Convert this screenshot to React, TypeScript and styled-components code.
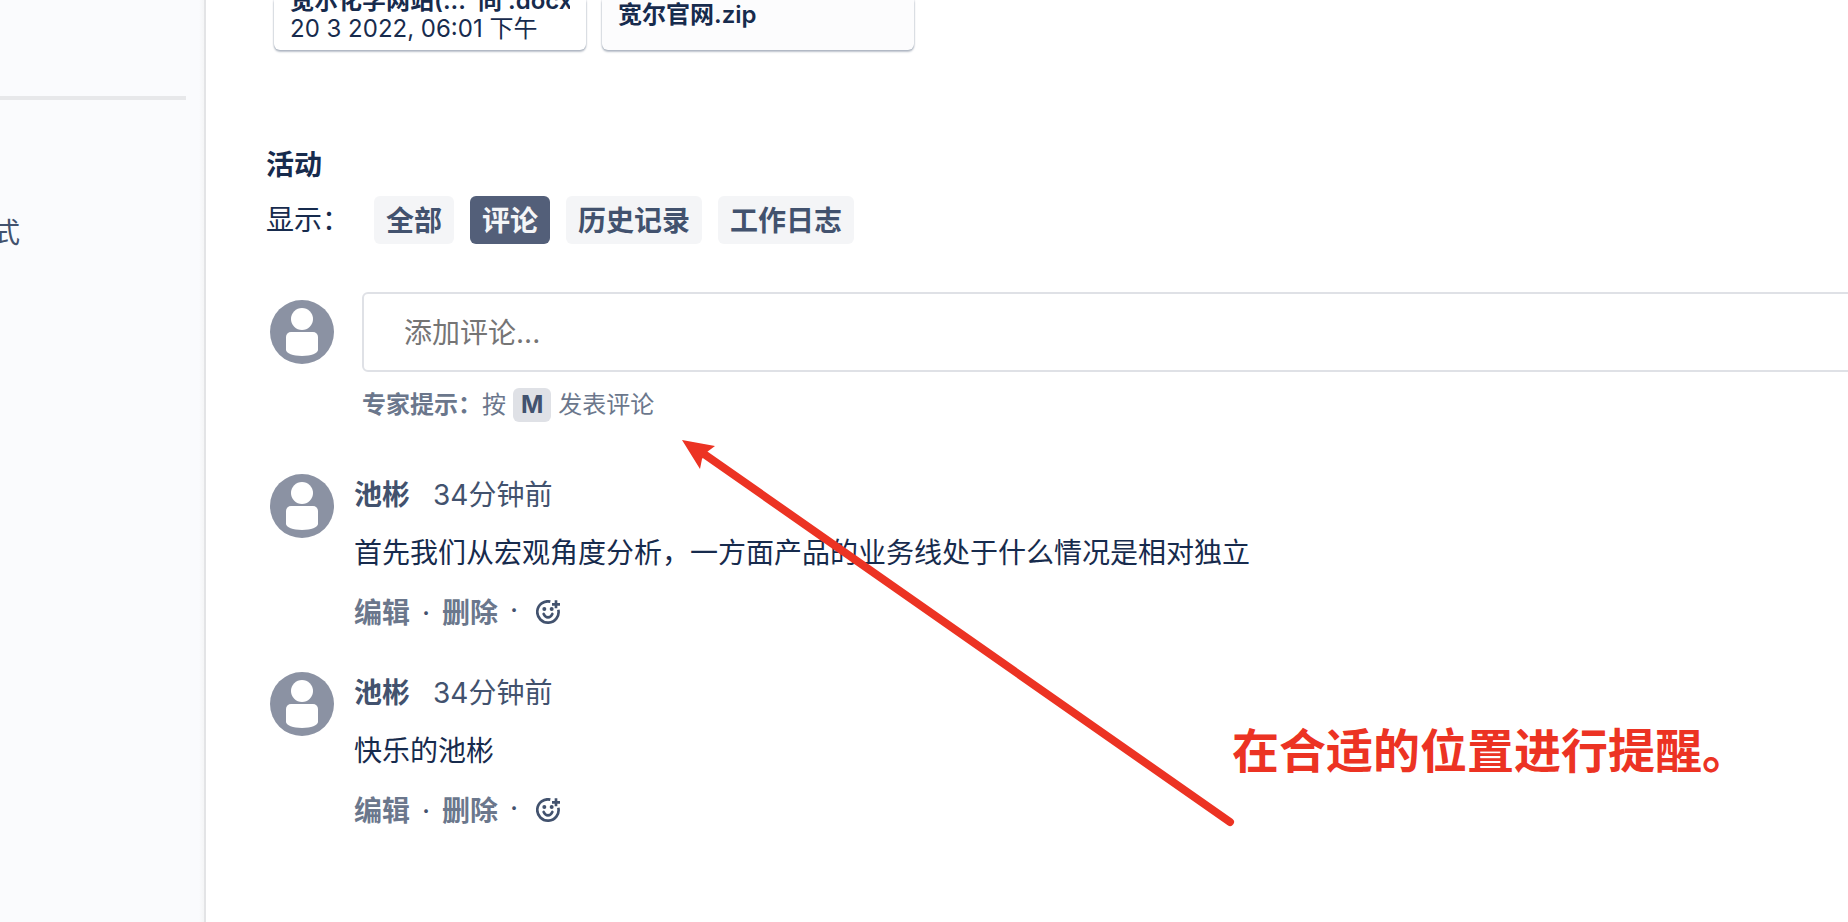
import React from 'react';
import styled, { createGlobalStyle } from 'styled-components';

const GlobalStyle = createGlobalStyle`
  *, *::before, *::after { box-sizing: border-box; }
  body {
    margin: 0;
    background: #fff;
    color: #172b4d;
    font-family: Inter, 'Noto Sans CJK SC', sans-serif;
    font-size: 28px;
    line-height: 42px;
  }
  button, input { font: inherit; }
`;

const Page = styled.div`
  position: relative;
  display: flex;
  min-height: 100vh;
  overflow: hidden;
`;

const Sidebar = styled.aside`
  flex: none;
  width: 206px;
  padding-top: 96px;
  background: linear-gradient(to left, #f4f5f6, #fafbfd 5px);
  border-right: 2px solid #e3e4e6;
`;

const Divider = styled.hr`
  height: 4px;
  margin: 0 18px 0 0;
  border: 0;
  background: #e7e8ea;
`;

const SidebarItem = styled.a`
  display: flex;
  justify-content: flex-end;
  width: 20px;
  margin-top: 112px;
  overflow: hidden;
  color: #42526e;
  text-decoration: none;
`;

const Main = styled.main`
  flex: 1;
  min-width: 0;
  padding-left: 60px;
`;

const Attachments = styled.div`
  display: flex;
  gap: 16px;
  padding-left: 8px;
`;

const FileCard = styled.article<{ $muted?: boolean }>`
  display: flex;
  flex-direction: column;
  justify-content: flex-end;
  width: 312px;
  height: 50px;
  padding: 0 16px ${(p) => (p.$muted ? '21px' : '7px')};
  overflow: hidden;
  border-radius: 0 0 6px 6px;
  background: ${(p) => (p.$muted ? '#fcfcfd' : '#fff')};
  box-shadow: 0 2px 2px rgba(9, 30, 66, 0.26), 0 0 2px rgba(9, 30, 66, 0.32);
  font-size: 24px;
  line-height: 28px;
`;

const FileName = styled.strong`
  flex: none;
  overflow: hidden;
  font-weight: 600;
  white-space: nowrap;
`;

const FileDate = styled.span`
  flex: none;
  min-height: 28px;
  white-space: nowrap;
`;

const Activity = styled.section`
  padding-top: 94px;
`;

const Heading = styled.h2`
  margin: 0;
  font-size: 28px;
  font-weight: 600;
`;

const Filters = styled.div`
  display: flex;
  align-items: center;
  gap: 16px;
  margin-top: 10px;
`;

const FilterLabel = styled.span`
  width: 92px;
`;

const FilterButton = styled.button<{ $active?: boolean }>`
  height: 48px;
  padding: 2px 12px 0;
  border: 0;
  border-radius: 6px;
  background: ${(p) => (p.$active ? '#535f79' : '#f4f5f7')};
  color: ${(p) => (p.$active ? '#f4f5f7' : '#42526e')};
  font-weight: 600;
`;

const Composer = styled.form`
  display: flex;
  gap: 28px;
  margin-top: 48px;
  padding-left: 4px;
`;

const AvatarSlot = styled.div`
  flex: none;
  height: 64px;
  margin-top: 8px;
`;

const ComposerBody = styled.div`
  flex: 1;
  min-width: 0;
`;

const CommentInput = styled.input`
  display: block;
  width: calc(100% + 8px);
  height: 80px;
  padding: 2px 40px 0;
  border: 2px solid #dfe1e6;
  border-radius: 6px;
  background: #fff;
  &::placeholder { color: #757575; opacity: 1; }
`;

const Hint = styled.p`
  display: flex;
  align-items: center;
  margin: 16px 0 0;
  color: #6b778c;
  font-size: 24px;
  line-height: 34px;
`;

const Key = styled.kbd`
  margin: 0 7px;
  padding: 0 8px;
  border-radius: 6px;
  background: #dfe1e6;
  color: #42526e;
  font-family: inherit;
  font-weight: 700;
`;

const Comments = styled.div`
  display: grid;
  gap: 66px;
  margin-top: 52px;
  padding-left: 4px;
`;

const CommentRow = styled.article`
  display: flex;
  gap: 20px;
  height: 132px;
`;

const CommentMeta = styled.div`
  display: flex;
  gap: 23px;
  color: #42526e;
`;

const CommentText = styled.p`
  margin: 16px 0 0;
  white-space: nowrap;
`;

const Actions = styled.div`
  display: flex;
  margin-top: 18px;
`;

const ActionButton = styled.button`
  padding: 0;
  border: 0;
  background: none;
  color: #6b778c;
  font-weight: 600;
`;

const Dot = styled.span`
  width: 32px;
  color: #42526e;
  text-align: center;
`;

const Reactions = styled.div`
  display: flex;
  align-items: flex-start;
  gap: 6px;
  line-height: 36px;
`;

const ReactButton = styled.button`
  display: flex;
  padding: 8px 0;
  border: 0;
  background: none;
  color: #42526e;
`;

const Arrow = styled.svg`
  position: absolute;
  top: 436px;
  left: 678px;
`;

const Note = styled.p`
  position: absolute;
  top: 721px;
  left: 1232px;
  margin: 0;
  color: #ec3323;
  font-size: 47px;
  font-weight: 700;
  line-height: 60px;
  white-space: nowrap;
`;

const Avatar = () => (
  <svg width="64" height="64" viewBox="0 0 64 64" aria-hidden="true">
    <circle cx="32" cy="32" r="32" fill="#8b92a3" />
    <circle cx="32" cy="19" r="11" fill="#fff" />
    <path
      d="M21 32h22a5 5 0 0 1 5 5v13c0 3-7 6-16 6s-16-3-16-6V37a5 5 0 0 1 5-5z"
      fill="#fff"
    />
  </svg>
);

const EmojiAdd = () => (
  <svg width="24" height="24" viewBox="0 0 72 72" fill="none" aria-hidden="true">
    <path d="M43 4.8A32 32 0 1 0 67 29" stroke="currentColor" strokeWidth="8" />
    <path d="M60 1v24M48 13h24" stroke="currentColor" strokeWidth="8" />
    <circle cx="25" cy="27" r="6" fill="currentColor" />
    <circle cx="47" cy="27" r="6" fill="currentColor" />
    <path
      d="M23 42c3 7 8 10 13 10s10-3 13-10"
      stroke="currentColor"
      strokeWidth="8"
      strokeLinecap="round"
    />
  </svg>
);

const comments = [
  {
    id: 1,
    author: '池彬',
    time: '34分钟前',
    text: '首先我们从宏观角度分析，一方面产品的业务线处于什么情况是相对独立',
  },
  { id: 2, author: '池彬', time: '34分钟前', text: '快乐的池彬' },
];

const filters = ['全部', '评论', '历史记录', '工作日志'];

export default function App() {
  return (
    <>
      <GlobalStyle />
      <Page>
        <Sidebar>
          <Divider />
          <SidebarItem href="#mode">式</SidebarItem>
        </Sidebar>
        <Main>
          <Attachments>
            <FileCard>
              <FileName>宽尔化学网站(...{'\u00a0 '}同 .docx</FileName>
              <FileDate>20 3 2022, 06:01 下午</FileDate>
            </FileCard>
            <FileCard $muted>
              <FileName>宽尔官网.zip</FileName>
            </FileCard>
          </Attachments>
          <Activity>
            <Heading>活动</Heading>
            <Filters>
              <FilterLabel>显示：</FilterLabel>
              {filters.map((name) => (
                <FilterButton key={name} type="button" $active={name === '评论'}>
                  {name}
                </FilterButton>
              ))}
            </Filters>
            <Composer>
              <AvatarSlot>
                <Avatar />
              </AvatarSlot>
              <ComposerBody>
                <CommentInput type="text" placeholder="添加评论..." aria-label="添加评论" />
                <Hint>
                  <strong>专家提示：</strong>
                  <span>按</span>
                  <Key>M</Key>
                  <span>发表评论</span>
                </Hint>
              </ComposerBody>
            </Composer>
            <Comments>
              {comments.map((c) => (
                <CommentRow key={c.id}>
                  <Avatar />
                  <div>
                    <CommentMeta>
                      <strong>{c.author}</strong>
                      <span>{c.time}</span>
                    </CommentMeta>
                    <CommentText>{c.text}</CommentText>
                    <Actions>
                      <ActionButton type="button">编辑</ActionButton>
                      <Dot>·</Dot>
                      <ActionButton type="button">删除</ActionButton>
                      <Reactions>
                        <Dot>·</Dot>
                        <ReactButton type="button" aria-label="添加表情">
                          <EmojiAdd />
                        </ReactButton>
                      </Reactions>
                    </Actions>
                  </div>
                </CommentRow>
              ))}
            </Comments>
          </Activity>
        </Main>
        <Arrow width="560" height="394" viewBox="0 0 560 394" aria-hidden="true">
          <path d="M26 18L552 386" stroke="#ec3323" strokeWidth="8" strokeLinecap="round" />
          <path d="M4 4L37 10L29 16L24 23L22 33Z" fill="#ec3323" />
        </Arrow>
        <Note>在合适的位置进行提醒。</Note>
      </Page>
    </>
  );
}
